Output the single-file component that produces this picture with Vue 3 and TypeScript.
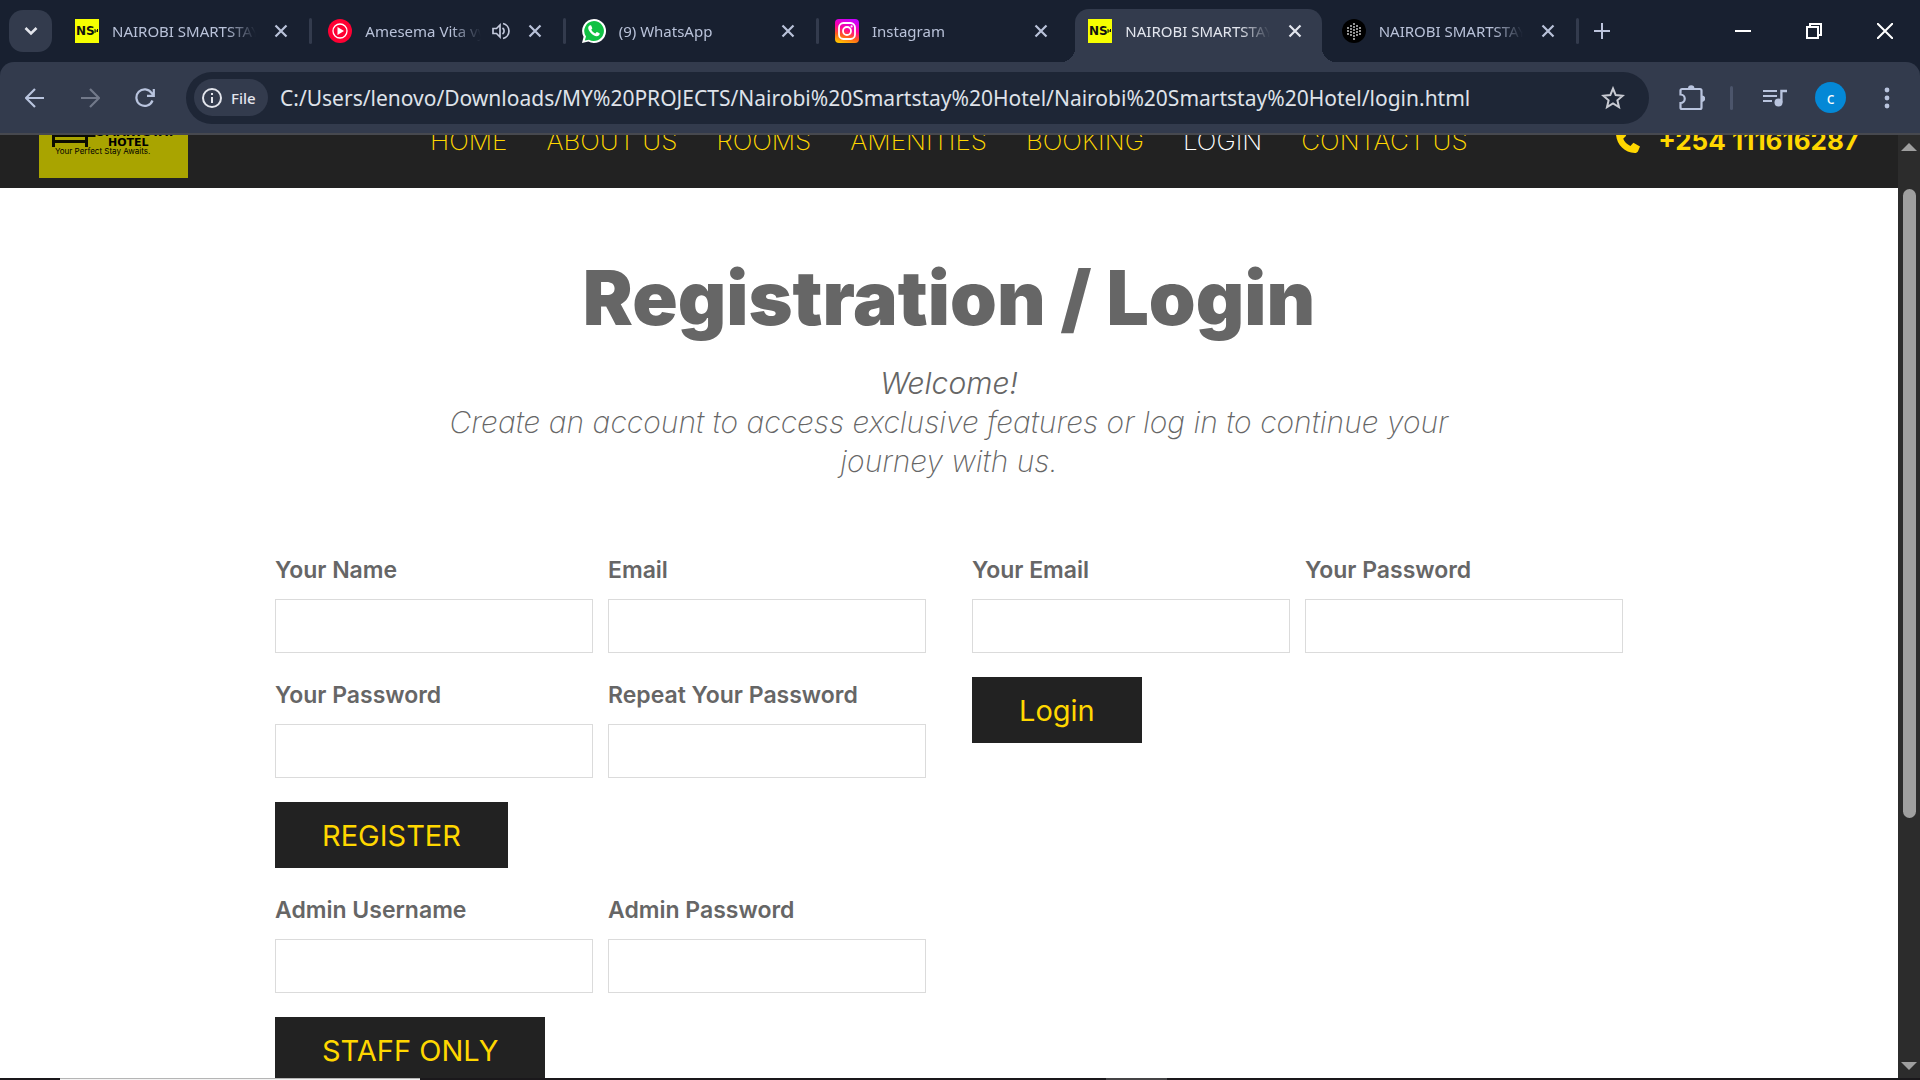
<script setup lang="ts">
interface Tab {
  id: number
  icon: 'hotel' | 'music' | 'whatsapp' | 'instagram' | 'dots'
  title: string
  active?: boolean
  audible?: boolean
  divider?: boolean
}

interface Field {
  id: string
  label: string
  type: string
}

const tabs: Tab[] = [
  { id: 1, icon: 'hotel', title: 'NAIROBI SMARTSTAY', divider: true },
  { id: 2, icon: 'music', title: 'Amesema Vita vy', audible: true, divider: true },
  { id: 3, icon: 'whatsapp', title: '(9) WhatsApp', divider: true },
  { id: 4, icon: 'instagram', title: 'Instagram' },
  { id: 5, icon: 'hotel', title: 'NAIROBI SMARTSTAY', active: true },
  { id: 6, icon: 'dots', title: 'NAIROBI SMARTSTAY', divider: true },
]

const url =
  'C:/Users/lenovo/Downloads/MY%20PROJECTS/Nairobi%20Smartstay%20Hotel/Nairobi%20Smartstay%20Hotel/login.html'

const links = ['HOME', 'ABOUT US', 'ROOMS', 'AMENITIES', 'BOOKING', 'LOGIN', 'CONTACT US']

const registerFields: Field[] = [
  { id: 'reg-name', label: 'Your Name', type: 'text' },
  { id: 'reg-email', label: 'Email', type: 'email' },
  { id: 'reg-password', label: 'Your Password', type: 'password' },
  { id: 'reg-repeat', label: 'Repeat Your Password', type: 'password' },
]
const adminFields: Field[] = [
  { id: 'admin-name', label: 'Admin Username', type: 'text' },
  { id: 'admin-password', label: 'Admin Password', type: 'password' },
]
const loginFields: Field[] = [
  { id: 'login-email', label: 'Your Email', type: 'email' },
  { id: 'login-password', label: 'Your Password', type: 'password' },
]

const dotColumns = [
  { x: 6, ys: [9, 12, 15] },
  { x: 9, ys: [7, 10, 13, 16] },
  { x: 12, ys: [5, 8, 11, 14, 17, 20] },
  { x: 15, ys: [7, 10, 13, 16] },
  { x: 18, ys: [9, 12, 15] },
]
</script>

<template>
  <div class="browser">
    <header class="strip">
      <button class="search-tabs" aria-label="Search tabs">
        <svg width="14" height="10" viewBox="0 0 14 10"><path d="M1.500 2l5.500 5.500L12.500 2" fill="none" stroke="#e3e5ec" stroke-width="2.600" /></svg>
      </button>
      <div class="tabs">
        <div v-for="tab in tabs" :key="tab.id" class="slot">
          <div class="tab" :class="{ active: tab.active }">
            <svg class="favicon" width="24" height="24" viewBox="0 0 24 24">
              <g v-if="tab.icon === 'hotel'">
                <rect width="24" height="24" fill="#f6ff00" />
                <text x="1" y="16" class="ns">NS</text>
                <path d="M20 10v4M20 12h3M22.500 10v3" stroke="#111" stroke-width="1" />
              </g>
              <g v-else-if="tab.icon === 'music'">
                <circle cx="12" cy="12" r="12" fill="#ff0033" />
                <circle cx="12" cy="12" r="7" fill="none" stroke="#fff" stroke-width="1.300" />
                <path d="M9.500 8v8l6.500-4z" fill="#fff" />
              </g>
              <g v-else-if="tab.icon === 'whatsapp'">
                <path d="M12 0a12 12 0 1 1-5.600 22.600L0 24l1.600-6.200A12 12 0 0 1 12 0z" fill="#fff" />
                <path d="M12 2a10 10 0 1 1-5 18.700L2.800 21.600 4 17.600A10 10 0 0 1 12 2z" fill="#10c143" />
                <path d="M8.300 6.300c-.8-.1-2.100 1-2.100 2.800 0 1.700 1.300 3.500 2.600 4.900 1.700 1.800 4 3.300 6 3.200 1.500-.1 2.800-1.100 2.900-2.400 0-.6-.2-.7-2.700-1.800-.7-.2-1.200 1.400-1.800 1.400-1.300-.3-3.500-2.200-3.900-3.600 0-.5 1-1 1-1.600L9.400 7c-.2-.6-.5-.7-1.100-.7z" fill="#fff" />
              </g>
              <g v-else-if="tab.icon === 'instagram'">
                <defs>
                  <linearGradient id="insta" x1="0.300" y1="1" x2="0.600" y2="0">
                    <stop offset="0" stop-color="#ffc000" />
                    <stop offset="0.300" stop-color="#ff5a1f" />
                    <stop offset="0.600" stop-color="#ff00a0" />
                    <stop offset="1" stop-color="#c800ff" />
                  </linearGradient>
                </defs>
                <rect width="24" height="24" rx="4" fill="url(#insta)" />
                <rect x="4" y="4" width="16" height="16" rx="4.500" fill="none" stroke="#fff" stroke-width="1.800" />
                <circle cx="12" cy="12" r="4" fill="none" stroke="#fff" stroke-width="1.800" />
                <circle cx="16.600" cy="7.400" r="1.100" fill="#fff" />
              </g>
              <g v-else>
                <circle cx="12" cy="12" r="12" fill="#000" />
                <g v-for="col in dotColumns" :key="col.x">
                  <circle v-for="y in col.ys" :key="y" :cx="col.x" :cy="y" r="0.900" fill="#d8d8d8" />
                </g>
              </g>
            </svg>
            <span class="title">{{ tab.title }}</span>
            <svg v-if="tab.audible" class="speaker" width="18" height="18" viewBox="0 0 18 18" fill="none" stroke="#c3c9dc" stroke-width="1.700">
              <path d="M1 6.500h3.500L8 3v12l-3.500-3.500H1z" />
              <path d="M10.500 6a3.600 3.600 0 0 1 0 6M11 1.500a7.700 7.700 0 0 1 0 15" />
            </svg>
            <button class="close" aria-label="Close tab">
              <svg width="14" height="14" viewBox="0 0 14 14"><path d="M1.500 1.500l11 11M12.500 1.500l-11 11" stroke="currentColor" stroke-width="2.200" /></svg>
            </button>
          </div>
          <i class="divider" :class="{ shown: tab.divider }"></i>
        </div>
      </div>
      <button class="new-tab" aria-label="New tab">
        <svg width="16" height="16" viewBox="0 0 16 16"><path d="M8 0v16M0 8h16" stroke="#bcc4dc" stroke-width="2" /></svg>
      </button>
      <div class="window-controls">
        <button aria-label="Minimize"><svg width="16" height="16"><path d="M0 8h16" stroke="#fff" stroke-width="2" /></svg></button>
        <button aria-label="Restore">
          <svg width="16" height="16" fill="none" stroke="#fff" stroke-width="2"><path d="M1 4h11v11H1zM4 4V1h11v11h-3" /></svg>
        </button>
        <button aria-label="Close"><svg width="16" height="16"><path d="M0 0l16 16M16 0L0 16" stroke="#fff" stroke-width="2" /></svg></button>
      </div>
    </header>

    <div class="toolbar-wrap">
      <div class="toolbar">
        <div class="nav-buttons">
          <button aria-label="Back"><svg width="20" height="20" viewBox="0 0 20 20" fill="none" stroke="#b9c4de" stroke-width="2.200"><path d="M19 10H2M10 1l-9 9 9 9" /></svg></button>
          <button aria-label="Forward"><svg width="20" height="20" viewBox="0 0 20 20" fill="none" stroke="#72798a" stroke-width="2.200"><path d="M1 10h17M10 1l9 9-9 9" /></svg></button>
          <button aria-label="Reload"><svg width="20" height="20" viewBox="0 0 20 20" fill="none" stroke="#b9c4de" stroke-width="2.200"><path d="M17.500 12.500A8.300 8.300 0 1 1 16.600 5L18.500 7M18.800 1v6.800H12" /></svg></button>
        </div>
        <div class="omnibox">
          <button class="chip">
            <svg width="20" height="20" viewBox="0 0 20 20"><circle cx="10" cy="10" r="9" fill="none" stroke="#e3e5ec" stroke-width="2" /><path d="M10 9v6M10 5v2" stroke="#e3e5ec" stroke-width="2" /></svg>
            <span>File</span>
          </button>
          <input class="address" type="text" aria-label="Address" :value="url" />
          <button class="star" aria-label="Bookmark this tab">
            <svg width="24" height="24" viewBox="0 0 24 24"><path d="M12 2.500l2.700 6.600 7 .6-5.300 4.600 1.600 6.900-6-3.700-6 3.700 1.600-6.900-5.300-4.600 7-.6z" fill="none" stroke="#c8cad2" stroke-width="2" /></svg>
          </button>
        </div>
        <button class="tool" aria-label="Extensions">
          <svg width="26" height="26" viewBox="0 0 26 26"><path d="M3 4h18a1.500 1.500 0 0 1 1.500 1.500v17A1.500 1.500 0 0 1 21 24H3a1.500 1.500 0 0 1-1.500-1.500V18a4.200 4.200 0 0 0 0-8.500v-4A1.500 1.500 0 0 1 3 4z" fill="none" stroke="#b9c4de" stroke-width="2.200" /><path d="M9 3.500a3.200 3.200 0 0 1 6.400 0zM23 10.500a3.200 3.200 0 0 1 0 6.400z" fill="#b9c4de" /></svg>
        </button>
        <i class="tool-divider"></i>
        <button class="tool" aria-label="Media controls">
          <svg width="24" height="18" viewBox="0 0 24 18"><path d="M0 2h14M0 7h14M0 12h9" stroke="#b9c4de" stroke-width="2" /><circle cx="15.500" cy="13.500" r="4" fill="#b9c4de" /><path d="M18.400 13.500V2H24" fill="none" stroke="#b9c4de" stroke-width="2.300" /></svg>
        </button>
        <button class="avatar" aria-label="Profile">c</button>
        <button class="tool menu" aria-label="Menu">
          <svg width="6" height="24" viewBox="0 0 6 24" fill="#b9c4de"><circle cx="3" cy="4" r="2.400" /><circle cx="3" cy="12" r="2.400" /><circle cx="3" cy="20" r="2.400" /></svg>
        </button>
      </div>
    </div>

    <div class="viewport">
      <div class="page">
        <header class="site-header">
          <a class="logo" href="#" aria-label="Nairobi Smartstay Hotel">
            <svg width="149" height="78" viewBox="0 0 149 78">
              <rect width="149" height="78" fill="#a9a400" />
              <path d="M14.500 20v27M14.500 41.500h34M47.500 30v17M14.500 35.500h42" fill="none" stroke="#0c0c00" stroke-width="3" />
              <text x="57" y="36" class="logo-name">SMARTSTAY</text>
              <text x="69" y="46" class="logo-hotel">HOTEL</text>
              <text x="16" y="54" class="logo-tag">Your Perfect Stay Awaits.</text>
            </svg>
          </a>
          <nav class="links">
            <a v-for="link in links" :key="link" href="#" :class="{ current: link === 'LOGIN' }">{{ link }}</a>
          </nav>
          <a class="phone" href="#">
            <svg width="24" height="24" viewBox="0 0 24 24"><path d="M1 2.500L6.500 0l3.700 6.800-3 2.900c1.300 3.100 3.800 5.600 7.200 7.200l3-3.100L24 17.500l-2 4.700c-.6 1.200-1.700 1.800-3.200 1.800C8.500 23.500.5 15.500 0 5.200 0 4 .2 3 1 2.500z" fill="#ffd700" /></svg>
            <span>+254 111616287</span>
          </a>
        </header>

        <main class="content">
          <h1>Registration / Login</h1>
          <p class="intro"><span>Welcome!</span><br />Create an account to access exclusive features or log in to continue your journey with us.</p>

          <div class="forms">
            <div class="column">
              <form class="form" @submit.prevent>
                <div v-for="f in registerFields" :key="f.id" class="field">
                  <label :for="f.id">{{ f.label }}</label>
                  <input :id="f.id" :type="f.type" />
                </div>
                <button class="submit" type="submit">REGISTER</button>
              </form>
              <form class="form" @submit.prevent>
                <div v-for="f in adminFields" :key="f.id" class="field">
                  <label :for="f.id">{{ f.label }}</label>
                  <input :id="f.id" :type="f.type" />
                </div>
                <button class="submit" type="submit">STAFF ONLY</button>
              </form>
            </div>
            <form class="form" @submit.prevent>
              <div v-for="f in loginFields" :key="f.id" class="field">
                <label :for="f.id">{{ f.label }}</label>
                <input :id="f.id" :type="f.type" />
              </div>
              <button class="submit" type="submit">Login</button>
            </form>
          </div>
        </main>
      </div>
      <div class="scrollbar">
        <svg width="16" height="8" viewBox="0 0 16 8"><path d="M0 8h16L8 0z" fill="#9f9f9f" /></svg>
        <div class="track"><div class="thumb"></div></div>
        <svg width="16" height="8" viewBox="0 0 16 8"><path d="M0 0h16L8 8z" fill="#9f9f9f" /></svg>
      </div>
    </div>

    <footer class="taskbar"><i class="task-search"></i><i class="task-app"></i></footer>
  </div>
</template>

<style>
body {
  margin: 0;
  overflow: hidden;
}
</style>

<style scoped>
* {
  box-sizing: border-box;
}
button {
  display: flex;
  align-items: center;
  justify-content: center;
  padding: 0;
  border: 0;
  background: none;
  font-family: inherit;
}
a {
  text-decoration: none;
}
svg {
  display: block;
  flex: none;
}
.browser {
  display: flex;
  flex-direction: column;
  height: 100vh;
  overflow: hidden;
  font-family: "Noto Sans", "Open Sans", sans-serif;
  background: #182030;
}

/* Tab strip */
.strip {
  display: flex;
  height: 62px;
  flex: none;
}
.search-tabs {
  width: 43px;
  height: 42px;
  margin: 10px 10px 0 9px;
  border-radius: 14px;
  background: #333b4d;
}
.tabs {
  display: flex;
  flex: 0 1 1520px;
  min-width: 0;
}
.slot {
  display: flex;
  flex: 1;
  min-width: 0;
}
.tab {
  position: relative;
  display: flex;
  flex: 1;
  align-items: center;
  min-width: 0;
  margin-top: 9px;
  padding: 0 20px 9px 13px;
  border-radius: 14px 14px 0 0;
  color: #b9c2d9;
}
.tab.active {
  background: #333b4d;
  color: #e3e6ee;
}
.tab.active::before,
.tab.active::after {
  content: "";
  position: absolute;
  bottom: 0;
  width: 14px;
  height: 14px;
}
.tab.active::before {
  right: 100%;
  background: radial-gradient(circle at 0 0, #182030 14px, #333b4d 14px);
}
.tab.active::after {
  left: 100%;
  background: radial-gradient(circle at 100% 0, #182030 14px, #333b4d 14px);
}
.ns {
  font: bold 12px "DejaVu Sans", sans-serif;
  fill: #111;
}
.title {
  flex: 1;
  min-width: 0;
  margin-left: 13px;
  overflow: hidden;
  white-space: nowrap;
  font-size: 15px;
  line-height: 24px;
  mask-image: linear-gradient(to right, #000 calc(100% - 30px), transparent);
}
.speaker {
  margin-left: 11px;
}
.close {
  margin-left: 18px;
  color: inherit;
}
.divider {
  width: 3px;
  height: 26px;
  margin: 18px 3px 0 1px;
  border-radius: 2px;
}
.divider.shown {
  background: #333b4d;
}
.new-tab {
  width: 40px;
  height: 62px;
}
.window-controls {
  display: flex;
  gap: 55px;
  margin-left: auto;
  padding-right: 27px;
}

/* Toolbar */
.toolbar-wrap {
  flex: none;
}
.toolbar {
  display: flex;
  align-items: center;
  height: 73px;
  padding: 0 30px 0 25px;
  border-bottom: 2px solid #47494f;
  border-radius: 14px 14px 0 0;
  background: #333b4d;
}
.nav-buttons {
  display: flex;
  gap: 35px;
  width: 161px;
}
.omnibox {
  display: flex;
  flex: 1;
  align-items: center;
  height: 52px;
  min-width: 0;
  padding: 0 24px 0 8px;
  border-radius: 26px;
  background: #1e2636;
}
.chip {
  gap: 9px;
  justify-content: flex-start;
  width: 74px;
  height: 37px;
  padding-left: 8px;
  border-radius: 19px;
  background: #333b4d;
  color: #e3e5ec;
  font-size: 15px;
  font-weight: 500;
}
.address {
  flex: 1;
  min-width: 0;
  height: 40px;
  margin-left: 12px;
  padding: 0;
  border: 0;
  outline: 0;
  background: none;
  color: #dfe2e9;
  font: 21px "Noto Sans", sans-serif;
}
.tool {
  margin-left: 30px;
}
.tool-divider {
  width: 3px;
  height: 24px;
  margin-left: 25px;
  border-radius: 2px;
  background: #4c556b;
}
.avatar {
  width: 31px;
  height: 31px;
  margin-left: 28px;
  border-radius: 50%;
  background: #0488d6;
  color: #fff;
  font-size: 16px;
  line-height: 16px;
}
.menu {
  margin-left: 38px;
}

/* Page */
.viewport {
  display: flex;
  flex: 1;
  min-height: 0;
}
.page {
  flex: 1;
  min-width: 0;
  overflow: hidden;
  background: #fff;
  color: #666;
  font-family: Inter, "Liberation Sans", sans-serif;
}
.site-header {
  display: flex;
  align-items: flex-end;
  height: 53px;
  overflow: hidden;
  padding: 0 39px;
  background: #222;
  color: #ffd700;
}
.logo {
  margin-bottom: 10px;
}
.logo-name {
  font: bold 12px "DejaVu Sans", sans-serif;
}
.logo-hotel {
  font: bold 11px "DejaVu Sans", sans-serif;
}
.logo-tag {
  font: 8px Inter, sans-serif;
}
.links {
  display: flex;
  gap: 39px;
  margin: 0 auto 30px 242px;
  font-size: 26px;
  font-weight: 200;
  line-height: 34px;
}
.links a {
  color: #ffd700;
  white-space: nowrap;
}
.links .current {
  color: #fff;
}
.phone {
  display: flex;
  gap: 18px;
  align-items: center;
  margin-bottom: 30px;
  color: #ffd700;
  font-size: 26px;
  font-weight: 700;
  line-height: 34px;
  white-space: nowrap;
}
.content {
  max-width: 1348px;
  margin: 0 auto;
  padding-top: 69px;
}
h1 {
  margin: 0;
  font-size: 75px;
  font-weight: 900;
  line-height: 82px;
  text-align: center;
}
.intro {
  max-width: 1040px;
  margin: 25px auto 71px;
  font-size: 30px;
  font-style: italic;
  font-weight: 200;
  line-height: 39px;
  text-align: center;
}
.intro span {
  font-weight: 300;
}
.forms {
  display: grid;
  grid-template-columns: 1fr 1fr;
  gap: 46px;
  align-items: start;
}
.column {
  display: flex;
  flex-direction: column;
  gap: 24px;
}
.form {
  display: grid;
  grid-template-columns: 1fr 1fr;
  gap: 24px 15px;
}
.field {
  display: flex;
  flex-direction: column;
  gap: 11px;
}
.field label {
  font-size: 23px;
  font-weight: 600;
  line-height: 36px;
}
.field input {
  width: 100%;
  height: 54px;
  padding: 0 16px;
  border: 1px solid #dbdbdb;
  background: #fff;
  font: 20px Inter, sans-serif;
}
.submit {
  grid-column: 1 / -1;
  justify-self: start;
  height: 66px;
  padding: 0 47px;
  background: #222;
  color: #ffd700;
  font-size: 29px;
  font-weight: 400;
}
.scrollbar {
  display: flex;
  flex-direction: column;
  align-items: center;
  width: 22px;
  padding: 8px 0;
  background: #2c2c2c;
}
.track {
  flex: 1;
  padding: 38px 0 0;
}
.thumb {
  width: 13px;
  height: 72%;
  border-radius: 7px;
  background: #9f9f9f;
}
.taskbar {
  display: flex;
  flex: none;
  height: 2px;
  background: #1a181b;
}
.task-search {
  width: 360px;
  margin-left: 60px;
  border-top: 1px solid #b5b5b5;
  background: #f3f3f3;
}
.task-app {
  width: 61px;
  margin-left: 686px;
  background: #454446;
}
</style>
